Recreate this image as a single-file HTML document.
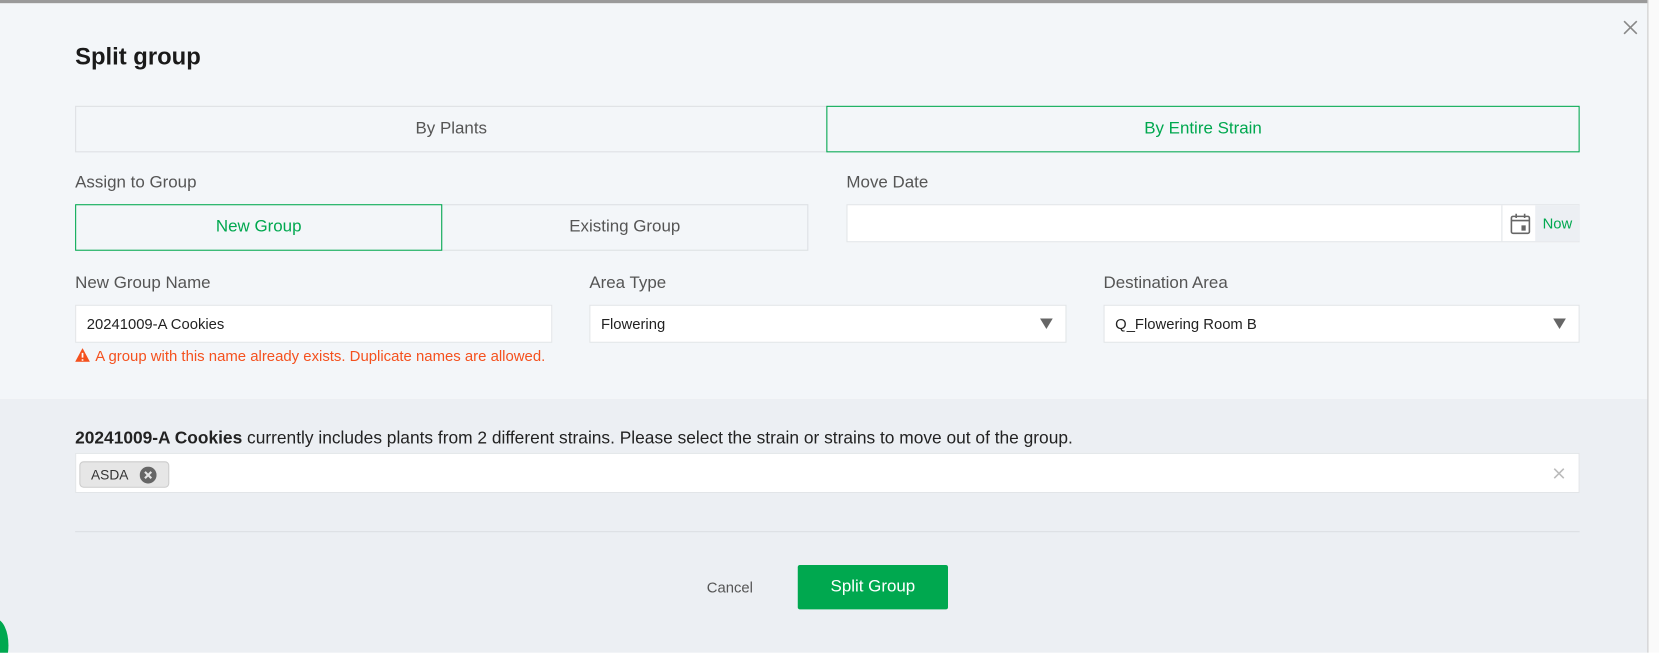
<!DOCTYPE html>
<html><head><meta charset="utf-8"><style>
*{box-sizing:border-box;margin:0;padding:0}
html,body{width:1659px;height:653px;overflow:hidden;background:#fff;font-family:"Liberation Sans",sans-serif}
#w{position:absolute;left:0;top:0;width:1568px;height:617px;transform:scale(1.05804);transform-origin:0 0;overflow:hidden}
.a{position:absolute}
.lbl{position:absolute;font-size:16px;color:#555}
.box{position:absolute;background:#fff;border:1px solid #e2e5e8}
.tab{position:absolute;display:flex;align-items:center;justify-content:center;font-size:16px;color:#555;border:1px solid #dde0e3}
.g{color:#00a84f;border-color:#00a84f}
.tx{position:absolute;font-size:14px;color:#222;left:10px;top:9px}
.arr{position:absolute;right:12px;top:12px;width:0;height:0;border-left:6px solid transparent;border-right:6px solid transparent;border-top:10px solid #666}
</style></head><body><div id="w">
<div class="a" style="left:0;top:0;width:1557px;height:377px;background:#f3f6f9"></div>
<div class="a" style="left:0;top:377px;width:1557px;height:240px;background:#eceff3"></div>
<div class="a" style="left:0;top:0;width:1568px;height:3px;background:#9a9a9a"></div>
<div class="a" style="left:1557px;top:0;width:11px;height:617px;background:#fafafa;border-left:1px solid #c8c8c8"></div>
<div class="a" style="left:-16px;top:585px;width:24px;height:50px;border-radius:50%;background:#00a84f"></div>
<div class="a" style="left:71px;top:41px;font-size:22.5px;font-weight:bold;color:#1a1a1a">Split group</div>
<svg class="a" style="left:1534px;top:19px" width="14" height="14"><path d="M1 1L13 13M13 1L1 13" stroke="#888" stroke-width="1.5"/></svg>
<div class="tab" style="left:71px;top:100px;width:711px;height:44px">By Plants</div>
<div class="tab g" style="left:781px;top:100px;width:712px;height:44px">By Entire Strain</div>
<div class="lbl" style="left:71px;top:164px">Assign to Group</div>
<div class="tab g" style="left:71px;top:193px;width:347px;height:44px;z-index:1">New Group</div>
<div class="tab" style="left:417px;top:193px;width:347px;height:44px">Existing Group</div>
<div class="lbl" style="left:800px;top:164px">Move Date</div>
<div class="box" style="left:800px;top:193px;width:693px;height:36px">
 <div class="a" style="left:618px;top:0;width:1px;height:34px;background:#e2e5e8"></div>
 <svg class="a" style="left:626px;top:7px" width="20" height="21"><rect x="1.5" y="3.5" width="17" height="16" rx="1.5" fill="none" stroke="#666" stroke-width="1.5"/><path d="M1.5 7.5H18.5M6 1V5M14 1V5" stroke="#666" stroke-width="1.5"/><rect x="11" y="12" width="4" height="5" fill="#666"/></svg>
 <div class="a" style="left:650px;top:0;width:42px;height:34px;background:#eceff3;color:#00a84f;font-size:14px;line-height:34px;text-align:center">Now</div>
</div>
<div class="lbl" style="left:71px;top:259px">New Group Name</div>
<div class="box" style="left:71px;top:288px;width:451px;height:36px"><div class="tx">20241009-A Cookies</div></div>
<div class="lbl" style="left:557px;top:259px">Area Type</div>
<div class="box" style="left:557px;top:288px;width:451px;height:36px"><div class="tx">Flowering</div><div class="arr"></div></div>
<div class="lbl" style="left:1043px;top:259px">Destination Area</div>
<div class="box" style="left:1043px;top:288px;width:450px;height:36px"><div class="tx">Q_Flowering Room B</div><div class="arr"></div></div>
<svg class="a" style="left:71px;top:329px" width="14" height="13"><path d="M7 0L14 13H0Z" fill="#f4511e"/><path d="M7 4.5V9M7 10.5V12" stroke="#fff" stroke-width="1.6"/></svg>
<div class="a" style="left:90px;top:328px;font-size:14.1px;color:#f4511e">A group with this name already exists. Duplicate names are allowed.</div>
<div class="a" style="left:71px;top:405px;font-size:16.4px;color:#222"><b>20241009-A Cookies</b> currently includes plants from 2 different strains. Please select the strain or strains to move out of the group.</div>
<div class="box" style="left:71px;top:428px;width:1422px;height:38px">
 <div class="a" style="left:3px;top:7px;width:85px;height:25px;background:#e6e6e6;border:1px solid #ccc;border-radius:4px">
  <span class="a" style="left:10px;top:4px;font-size:13px;color:#333">ASDA</span>
  <svg class="a" style="left:56px;top:4px" width="16" height="16"><circle cx="8" cy="8" r="8" fill="#666"/><path d="M5 5L11 11M11 5L5 11" stroke="#e6e6e6" stroke-width="2"/></svg>
 </div>
 <svg class="a" style="left:1396px;top:13px" width="11" height="11"><path d="M1 1L10 10M10 1L1 10" stroke="#bbb" stroke-width="1.5"/></svg>
</div>
<div class="a" style="left:71px;top:502px;width:1422px;height:1px;background:#dcdfe3"></div>
<div class="a" style="left:668px;top:547px;font-size:14px;color:#555">Cancel</div>
<div class="a" style="left:754px;top:534px;width:142px;height:42px;background:#00a84f;border-radius:2px;color:#fff;font-size:16px;line-height:42px;text-align:center">Split Group</div>
</div></body></html>
